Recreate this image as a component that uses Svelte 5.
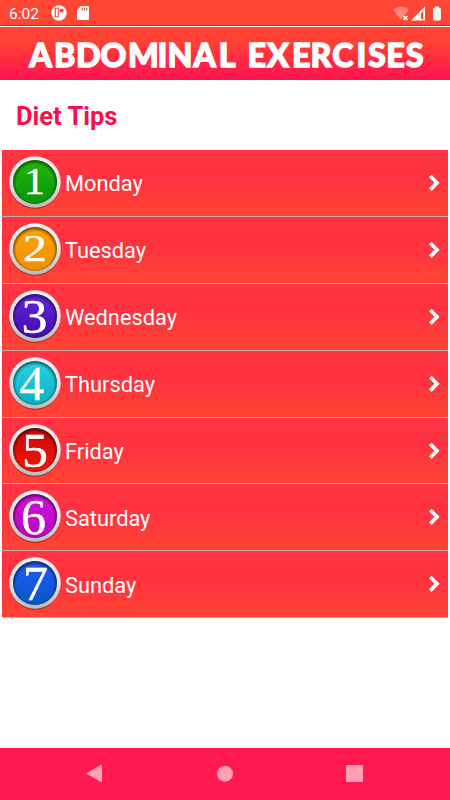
<script>
    let days = [
        { name: "Monday", num: 1, light: "#20b80b", dark: "#09950c", size: 37, x: 17, y: 42.5, width: 21 },
        { name: "Tuesday", num: 2, light: "#ffa20d", dark: "#ee9000", size: 38, x: 16, y: 43, width: 24 },
        { name: "Wednesday", num: 3, light: "#6326dc", dark: "#4409b0", size: 48, x: 14.5, y: 47.5, width: 26 },
        { name: "Thursday", num: 4, light: "#2bd0e6", dark: "#0aafc0", size: 49, x: 12.5, y: 47.5, width: 25 },
        { name: "Friday", num: 5, light: "#c80909", dark: "#f51405", size: 48, x: 15, y: 47.5, width: 26 },
        { name: "Saturday", num: 6, light: "#d012d8", dark: "#b806c4", size: 50, x: 14, y: 48.5, width: 25 },
        { name: "Sunday", num: 7, light: "#2459f3", dark: "#0758c8", size: 49, x: 16, y: 48, width: 25 }
    ]
</script>

<main class="screen">
    <div class="status">
        <span class="time">6:02</span>
        <svg class="app_icon" width="16" height="16" viewBox="0 0 16 16">
            <circle cx="8" cy="8" r="7.7" fill="#fff" />
            <path d="M4.3 3.2v8.6h3V3.2z" fill="none" stroke="#ff4635" stroke-width="1.1" />
            <circle cx="10.6" cy="5.6" r="2.1" fill="#ff4635" />
        </svg>
        <svg class="card_icon" width="12" height="14" viewBox="0 0 12 14">
            <path d="M4 0h7q1 0 1 1v12q0 1-1 1H1q-1 0-1-1V4z" fill="#fff" />
            <path d="M5.1 1.8v2.6M7.4 1.8v2.6M9.7 1.8v2.6" stroke="#ff4635" stroke-width="1.2" />
        </svg>
        <svg class="signals" width="52" height="17" viewBox="0 0 52 17">
            <path d="M2 4.5Q10-1.5 18 4.5L10 15z" fill="#fff" opacity=".35" />
            <path d="M12.5 11l4 4M16.5 11l-4 4" stroke="#ff4635" stroke-width="3.6" />
            <path d="M12.5 11l4 4M16.5 11l-4 4" stroke="#fff" stroke-width="1.7" />
            <path d="M20 15.5L34 1.5v14z" fill="#fff" />
            <path d="M29.9 8.4l2.3-2.3v7.8h-2.3z" fill="#ff4635" />
            <path d="M44 1.5h4v1.3h.6q1.3 0 1.3 1.3v10q0 1.3-1.3 1.3h-5.2q-1.3 0-1.3-1.3v-10q0-1.3 1.3-1.3h.6z" fill="#fff" />
        </svg>
    </div>

    <header class="banner">
        <svg width="450" height="53" viewBox="0 0 450 53">
            <text x="29.3 54 76 100.3 128 157.4 167.5 193.3 218.7" y="40.3">ABDOMINAL</text>
            <text x="247.6 267 292 310.4 332.3 356.4 367.9 386.2 405.8" y="40.3">EXERCISES</text>
        </svg>
    </header>

    <h1>Diet Tips</h1>

    <ul class="days">
        {#each days as day}
            <li>
                <svg class="badge" width="58" height="62" viewBox="0 0 58 62">
                    <defs>
                        <linearGradient id="fill{day.num}" x1="0" y1="0" x2="0" y2="1">
                            <stop offset="0" stop-color={day.light} />
                            <stop offset="1" stop-color={day.dark} />
                        </linearGradient>
                        <linearGradient id="ring{day.num}" x1="0" y1="0" x2="0" y2="1">
                            <stop offset="0" stop-color="#f3f3f3" />
                            <stop offset=".6" stop-color="#dedede" />
                            <stop offset="1" stop-color="#b9b9b9" />
                        </linearGradient>
                        <radialGradient id="shade{day.num}" cy=".53" r=".53">
                            <stop offset=".8" stop-color="#000" stop-opacity="0" />
                            <stop offset="1" stop-color="#000" stop-opacity=".6" />
                        </radialGradient>
                    </defs>
                    <circle cx="28" cy="31.2" r="25.6" fill="#5a1010" opacity=".55" />
                    <circle cx="28" cy="30" r="25.8" fill="url(#ring{day.num})" />
                    <circle cx="28" cy="30" r="22" fill="url(#fill{day.num})" />
                    <circle cx="28" cy="30" r="22" fill="url(#shade{day.num})" />
                    <text x={day.x} y={day.y - 1} font-size={day.size} textLength={day.width} lengthAdjust="spacingAndGlyphs">{day.num}</text>
                </svg>
                <span class="name">{day.name}</span>
                <svg class="arrow" width="14" height="18" viewBox="0 0 14 18">
                    <path d="M2.3 2L9 8.8l-6.7 6.8" fill="none" stroke="#fff" stroke-width="3.7" />
                </svg>
            </li>
        {/each}
    </ul>

    <nav>
        <svg width="450" height="52" viewBox="0 0 450 52">
            <path d="M86.5 25.2L101 16.8q1-.5 1 .6v16q0 1-1 .5L86.5 25.8q-.5-.3 0-.6z" />
            <circle cx="225" cy="25.7" r="8" />
            <rect x="346" y="17" width="17" height="17" rx="1" />
        </svg>
    </nav>
</main>

<style>
    :global(body){
        margin: 0;
        background: #fff;
    }

    .screen{
        width: 450px;
        height: 800px;
        display: flex;
        flex-direction: column;
        background: #fff;
        font-family: Roboto, sans-serif;
        overflow: hidden;
    }

    svg{
        display: block;
        flex: none;
    }

    .status{
        height: 26px;
        box-sizing: border-box;
        flex: none;
        display: flex;
        align-items: center;
        padding: 1px 7px 0 9px;
        background: #ff4635;
        border-bottom: 1px solid #f51b12;
        color: #fff;
    }

    .time{
        width: 42px;
        padding-top: 2px;
        font-size: 15.5px;
    }

    .card_icon{
        margin-left: 10px;
    }

    .signals{
        margin-left: auto;
    }

    .banner{
        height: 53px;
        flex: none;
        margin-top: 1px;
        background: linear-gradient(#ff4635, #ff4035 30%, #ff164f 94%);
    }

    .banner text{
        font-family: Lato, sans-serif;
        font-size: 32.3px;
        font-weight: 900;
        fill: #fff;
        stroke: #fff;
        stroke-width: 1.3px;
    }

    h1{
        height: 70px;
        flex: none;
        margin: 0;
        padding-left: 16px;
        line-height: 72px;
        font-size: 25.5px;
        font-weight: 700;
        color: #fb0d49;
    }

    .days{
        flex: 1;
        margin: 0;
        padding: 0 2px;
        list-style: none;
    }

    li{
        height: 66.9px;
        box-sizing: border-box;
        display: flex;
        align-items: center;
        padding: 0 6px 0 5px;
        background: linear-gradient(#ff3341 0%, #ff3340 45%, #ff4433 100%);
        border-bottom: 1px solid #c4aaa4;
    }

    .badge text{
        font-family: "Liberation Serif", serif;
        fill: #fff;
        stroke: #fff;
        stroke-width: 0.4px;
    }

    .name{
        flex: 1;
        padding-top: 2px;
        font-size: 21.8px;
        color: #fff;
    }

    nav{
        height: 52px;
        flex: none;
        background: #ff194f;
    }

    nav svg{
        fill: #ffa0b7;
    }
</style>
